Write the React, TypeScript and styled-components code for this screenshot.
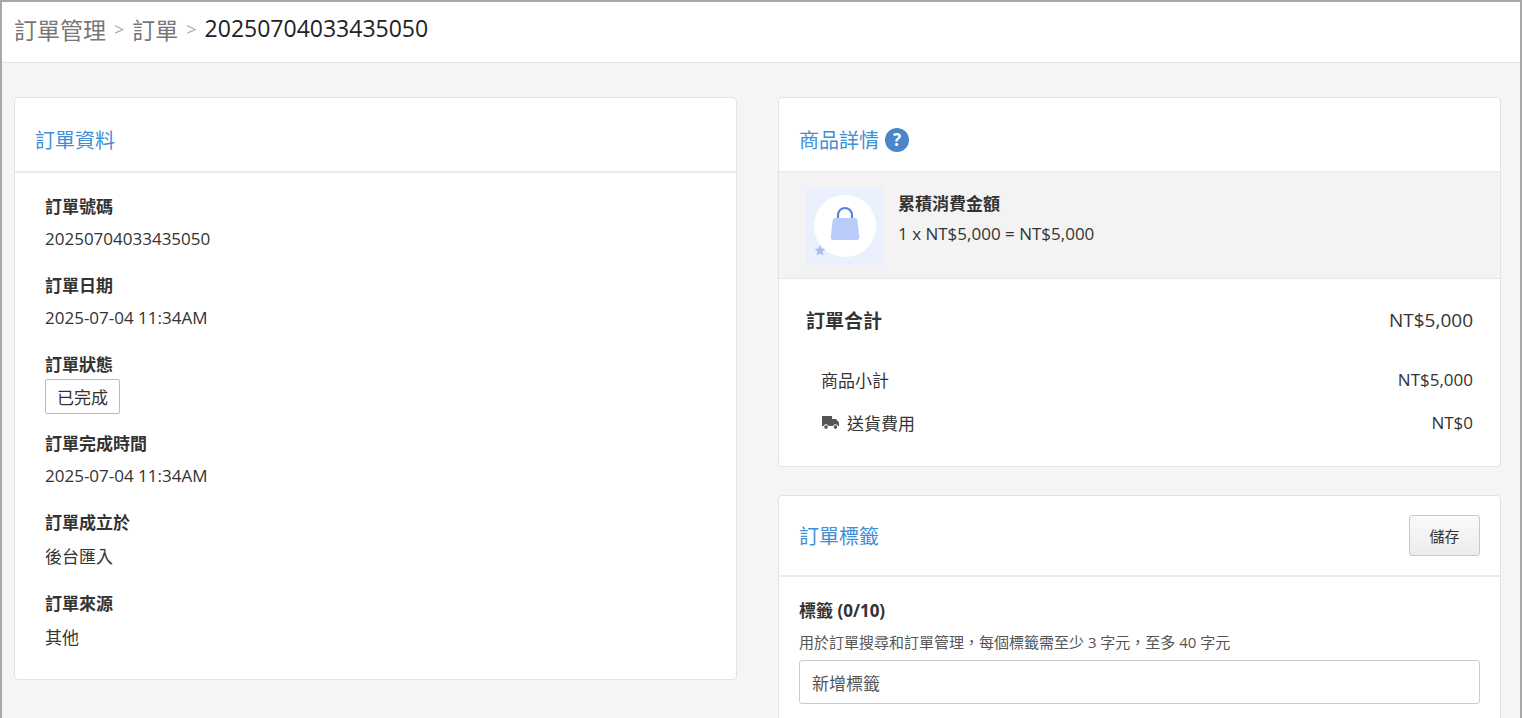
import styled, { createGlobalStyle } from "styled-components"

const Global = createGlobalStyle`
  html, body { margin: 0; height: 100%; }
  body {
    font-family: "Open Sans", "Noto Sans CJK TC", sans-serif;
    color: #333;
    background: #f5f5f5;
  }
`

const Frame = styled.div`
  box-sizing: border-box;
  height: 718px;
  border: 2px solid #a8a8a8;
  border-bottom: none;
  background: #f5f5f5;
  overflow: hidden;
`

const TopBar = styled.div`
  box-sizing: border-box;
  height: 61px;
  background: #fff;
  border-bottom: 1px solid #e6e6e6;
  display: flex;
  align-items: flex-start;
  padding: 10px 0 0 12px;
  font-size: 23px;
  color: #777;
  gap: 8px;
`

const Sep = styled.span`
  color: #aaa;
  font-size: 18px;
  line-height: 34px;
`

const Current = styled.span`
  color: #222;
`

const Columns = styled.div`
  display: grid;
  grid-template-columns: 723px 723px;
  gap: 41px;
  padding: 34px 0 0 12px;
  align-items: start;
`

const Stack = styled.div`
  display: flex;
  flex-direction: column;
  gap: 28px;
`

const Card = styled.div`
  background: #fff;
  border: 1px solid #e3e3e3;
  border-radius: 4px;
  overflow: hidden;
`

const CardHead = styled.div<{ $tall?: boolean }>`
  box-sizing: border-box;
  height: ${(p) => (p.$tall ? "81px" : "75px")};
  border-bottom: 2px solid #ececec;
  display: flex;
  align-items: center;
  justify-content: space-between;
  padding: ${(p) => (p.$tall ? "0 20px" : "10px 20px 0")};
`

const Title = styled.div`
  color: #3d8fd6;
  font-size: 20px;
  display: flex;
  align-items: center;
  gap: 6px;
`

const InfoBody = styled.div`
  padding: 20px 30px 30px;
  display: flex;
  flex-direction: column;
  gap: 22px;
`

const Field = styled.div`
  display: flex;
  flex-direction: column;
  gap: 9px;
`

const Label = styled.div`
  font-size: 17px;
  font-weight: 700;
  color: #333;
`

const Value = styled.div`
  font-size: 17px;
  color: #333;
`

const Badge = styled.div`
  align-self: flex-start;
  border: 1px solid #bbb;
  border-radius: 2px;
  padding: 4px 11px;
  font-size: 17px;
  margin-top: -6px;
  margin-bottom: -6px;
`

const ProductRow = styled.div`
  background: #f3f3f3;
  padding: 14px 27px 13px;
  display: flex;
  align-items: flex-start;
  gap: 14px;
  border-bottom: 1px solid #e6e6e6;
`

const Thumb = styled.div`
  width: 78px;
  height: 78px;
  background: #eaf0fd;
  border-radius: 4px;
  display: flex;
  align-items: center;
  justify-content: center;
`

const ProductText = styled.div`
  display: flex;
  flex-direction: column;
  gap: 7px;
  padding-top: 3px;
`

const ProductName = styled.div`
  font-weight: 700;
  font-size: 17px;
`

const Summary = styled.div`
  padding: 19px 27px 22px;
  display: flex;
  flex-direction: column;
`

const Line = styled.div<{ $big?: boolean; $indent?: boolean }>`
  display: flex;
  justify-content: space-between;
  align-items: center;
  font-size: ${(p) => (p.$big ? "19px" : "17px")};
  font-weight: ${(p) => (p.$big ? 600 : 400)};
  padding-left: ${(p) => (p.$indent ? "15px" : "0")};
  height: ${(p) => (p.$big ? "44px" : "43px")};
  margin-bottom: ${(p) => (p.$big ? "16px" : "0")};
`

const LineLabel = styled.span`
  display: flex;
  align-items: center;
  gap: 7px;
`

const Amount = styled.span<{ $big?: boolean }>`
  font-weight: 400;
  font-size: ${(p) => (p.$big ? "19px" : "17px")};
`

const SaveButton = styled.button`
  font-family: inherit;
  font-size: 15px;
  color: #333;
  background: linear-gradient(#fafafa, #ececec);
  border: 1px solid #c8c8c8;
  border-radius: 3px;
  width: 71px;
  height: 41px;
`

const TagBody = styled.div`
  padding: 20px 20px 20px;
  display: flex;
  flex-direction: column;
`

const Hint = styled.div`
  font-size: 15px;
  color: #555;
  margin: 9px 0 8px;
`

const Input = styled.div`
  height: 42px;
  border: 1px solid #ccc;
  border-radius: 3px;
  display: flex;
  align-items: center;
  padding: 0 12px;
  color: #555;
  font-size: 17px;
`

const fields: [string, string][] = [
  ["訂單號碼", "20250704033435050"],
  ["訂單日期", "2025-07-04 11:34AM"],
  ["訂單狀態", ""],
  ["訂單完成時間", "2025-07-04 11:34AM"],
  ["訂單成立於", "後台匯入"],
  ["訂單來源", "其他"],
]

const App = () => {
  return (
    <Frame>
      <Global />
      <TopBar>
        訂單管理<Sep>&gt;</Sep>訂單<Sep>&gt;</Sep>
        <Current>20250704033435050</Current>
      </TopBar>
      <Columns>
        <Card>
          <CardHead>
            <Title>訂單資料</Title>
          </CardHead>
          <InfoBody>
            {fields.map(([k, v]) => (
              <Field key={k}>
                <Label>{k}</Label>
                {v ? <Value>{v}</Value> : <Badge>已完成</Badge>}
              </Field>
            ))}
          </InfoBody>
        </Card>
        <Stack>
          <Card>
            <CardHead>
              <Title>
                商品詳情
                <svg width="24" height="24" viewBox="0 0 24 24">
                  <circle cx="12" cy="12" r="12" fill="#4a86c8" />
                  <text x="12" y="17.5" textAnchor="middle" fill="#fff" fontSize="17" fontWeight="700" fontFamily="Open Sans, sans-serif">?</text>
                </svg>
              </Title>
            </CardHead>
            <ProductRow>
              <Thumb>
                <svg width="78" height="78" viewBox="0 0 78 78">
                  <circle cx="39" cy="39" r="31" fill="#fff" />
                  <path d="M32 32 v-4 a7 7 0 0 1 14 0 v4" fill="none" stroke="#5b82e0" strokeWidth="2.2" />
                  <path d="M29 31 h20 q2 0 2.3 2 l2 17 q0 3 -3 3 h-22.6 q-3 0 -3 -3 l2 -17 q0.3 -2 2.3 -2z" fill="#b9ccfa" />
                  <path d="M14 58 l1.7 3.5 3.8 .5 -2.8 2.6 .7 3.8 -3.4 -1.9 -3.4 1.9 .7 -3.8 -2.8 -2.6 3.8 -.5z" fill="#a9bff3" />
                </svg>
              </Thumb>
              <ProductText>
                <ProductName>累積消費金額</ProductName>
                <Value>1 x NT$5,000 = NT$5,000</Value>
              </ProductText>
            </ProductRow>
            <Summary>
              <Line $big>
                <span>訂單合計</span>
                <Amount $big>NT$5,000</Amount>
              </Line>
              <Line $indent>
                <span>商品小計</span>
                <Amount>NT$5,000</Amount>
              </Line>
              <Line $indent>
                <LineLabel>
                  <svg width="19" height="15" viewBox="0 0 19 15">
                    <path d="M1 1 h10 v10 h-10z M11 4 h4 l3 3.5 v3.5 h-7z" fill="#555" />
                    <circle cx="5" cy="12" r="2.3" fill="#555" stroke="#fff" strokeWidth="1" />
                    <circle cx="14.5" cy="12" r="2.3" fill="#555" stroke="#fff" strokeWidth="1" />
                  </svg>
                  送貨費用
                </LineLabel>
                <Amount>NT$0</Amount>
              </Line>
            </Summary>
          </Card>
          <Card>
            <CardHead $tall>
              <Title>訂單標籤</Title>
              <SaveButton>儲存</SaveButton>
            </CardHead>
            <TagBody>
              <Label>標籤 (0/10)</Label>
              <Hint>用於訂單搜尋和訂單管理，每個標籤需至少 3 字元，至多 40 字元</Hint>
              <Input>新增標籤</Input>
            </TagBody>
          </Card>
        </Stack>
      </Columns>
    </Frame>
  )
}

export default App
